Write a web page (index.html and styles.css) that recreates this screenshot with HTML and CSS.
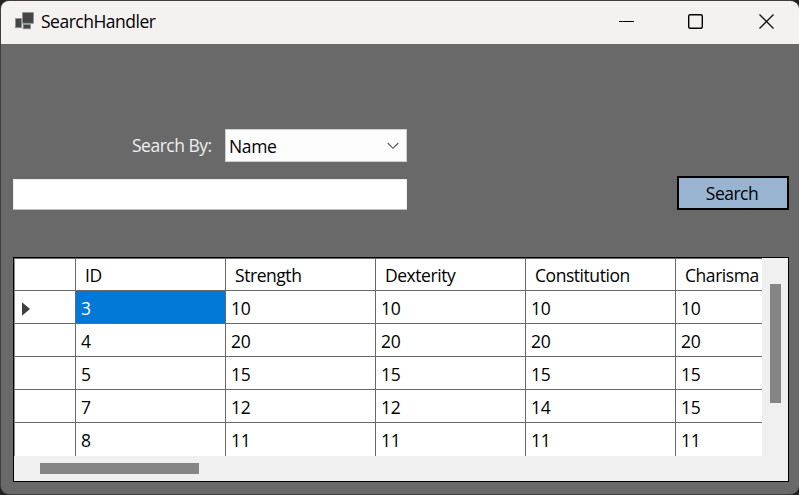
FILE: index.html
```html
<!DOCTYPE html>
<html lang="en">
<head>
<meta charset="utf-8">
<title>SearchHandler</title>
<link rel="stylesheet" href="styles.css">
</head>
<body>
<div class="window">
  <header class="titlebar">
    <svg class="app-icon" width="20" height="18" viewBox="0 0 20 18">
      <g fill="#444546" stroke="#8f9091" stroke-width=".8">
        <rect x="7.600" y=".5" width="10.800" height="10.800"/>
        <rect x=".5" y="6.500" width="6" height="9.200"/>
        <rect x="8.200" y="12.500" width="7.300" height="4.300"/>
      </g>
    </svg>
    <span class="title">SearchHandler</span>
    <div class="controls">
      <svg width="70" height="43" viewBox="0 0 70 43"><path d="M27 20.500h15" stroke="#000"/></svg>
      <svg width="70" height="43" viewBox="0 0 70 43"><rect x="26.700" y="13.700" width="13.600" height="13.600" rx="1.500" fill="none" stroke="#000" stroke-width="1.400"/></svg>
      <svg width="70" height="43" viewBox="0 0 70 43"><path d="M27.500 13.500l14 14M41.500 13.500l-14 14" stroke="#111" stroke-width="1.300"/></svg>
    </div>
  </header>
  <main class="form">
    <div class="search-by">
      <label class="label">Search By:</label>
      <div class="select">
        <span>Name</span>
        <svg width="12" height="8" viewBox="0 0 12 8"><path d="M.7 1L6 6.300 11.300 1" fill="none" stroke="#555" stroke-width="1.100"/></svg>
      </div>
    </div>
    <div class="query">
      <input class="input" type="text">
      <button class="button">Search</button>
    </div>
    <div class="grid-view">
      <div class="rows">
        <div class="row head"><div></div><div>ID</div><div>Strength</div><div>Dexterity</div><div>Constitution</div><div>Charisma</div></div>
        <div class="row"><div class="marker"><svg width="8" height="14" viewBox="0 0 8 14"><path d="M0 .3L8 7 0 13.700z" fill="#404040"/></svg></div><div class="selected">3</div><div>10</div><div>10</div><div>10</div><div>10</div></div>
        <div class="row"><div></div><div>4</div><div>20</div><div>20</div><div>20</div><div>20</div></div>
        <div class="row"><div></div><div>5</div><div>15</div><div>15</div><div>15</div><div>15</div></div>
        <div class="row"><div></div><div>7</div><div>12</div><div>12</div><div>14</div><div>15</div></div>
        <div class="row"><div></div><div>8</div><div>11</div><div>11</div><div>11</div><div>11</div></div>
      </div>
      <div class="vscroll"><div class="vthumb"></div></div>
      <div class="hscroll"><div class="hthumb"></div></div>
    </div>
  </main>
</div>
</body>
</html>
```
FILE: styles.css
```css
* { box-sizing: border-box; }
body {
  margin: 0;
  background: #202020;
  font: 400 17.5px/24px "Open Sans", "Noto Sans", sans-serif;
  letter-spacing: -.35px;
  color: #000;
  overflow: hidden;
}
.window {
  width: 799px;
  height: 495px;
  border: 1px solid #3f3d3d;
  border-right: 0;
  border-radius: 9px;
  background: #696969;
  overflow: hidden;
}
.titlebar {
  display: flex;
  align-items: center;
  height: 43px;
  padding-left: 14px;
  background: #f5f1f1;
}
.app-icon { margin-top: -3px; }
.title { margin: -3px 0 0 6px; letter-spacing: -.5px; }
.controls { display: flex; margin-left: auto; margin-right: -3px; }
.form { padding: 85px 10px 12px 12px; }
.search-by { display: flex; align-items: center; height: 33px; }
.label { width: 212px; padding-left: 119px; margin-top: -1px; color: #f0f0f0; white-space: nowrap; letter-spacing: -.5px; }
.select {
  display: flex;
  align-items: center;
  justify-content: space-between;
  width: 182px;
  height: 33px;
  padding: 1px 7px 0 4px;
  border: 1px solid #d0d0d0;
  background: #fdfdfd;
}
.select span { margin-left: -1px; }
.query {
  display: flex;
  align-items: flex-end;
  justify-content: space-between;
  height: 34px;
  margin-top: 14px;
}
.input {
  width: 394px;
  height: 31px;
  border: 1px solid #eee;
  border-bottom-color: #bbb;
  border-radius: 1px;
  background: #fff;
}
.button {
  width: 112px;
  height: 34px;
  padding: 0 2px 0 0;
  border: 2px solid #000;
  background: #99b4d1;
  font: inherit;
  letter-spacing: -.5px;
}
.grid-view {
  display: grid;
  grid-template: 198px 25px / 748px 26px;
  width: 776px;
  height: 225px;
  margin-top: 47px;
  border: 1px solid #000;
  background: #f0f0f0;
}
.rows {
  overflow: hidden;
  border-top: 1px solid #696969;
  border-left: 1px solid #8c8c8c;
  background: #fff;
}
.row {
  display: grid;
  grid-template-columns: 61px repeat(5, 150px);
  height: 33px;
}
.row > div {
  border-right: 1px solid #696969;
  border-bottom: 1px solid #696969;
  padding: 5px 0 0 5px;
}
.row:last-child > div { border-bottom: 0; }
.head { height: 32px; letter-spacing: -.45px; }
.head > div { padding: 4px 0 0 9px; }
.row > .selected { background: #0078d7; color: #fff; }
.row > .marker { padding: 11px 0 0 7px; line-height: 0; }
.vscroll { padding: 26px 0 0 8px; }
.vthumb { width: 11px; height: 119px; background: #858585; }
.hscroll { grid-column: 1 / 3; padding: 7px 0 0 26px; }
.hthumb { width: 159px; height: 11px; background: #858585; }
```
